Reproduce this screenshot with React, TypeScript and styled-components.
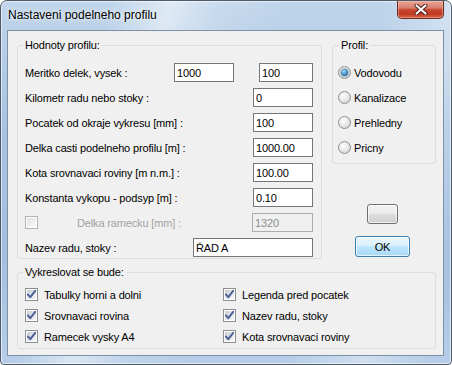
import React from "react";
import styled, { createGlobalStyle } from "styled-components";

const GlobalStyle = createGlobalStyle`
  html, body { margin: 0; padding: 0; background: #ffffff; }
  body { font-family: "Liberation Sans", Arial, sans-serif; font-size: 11px; color: #000; letter-spacing: -0.15px; }
  * { box-sizing: border-box; }
`;

const Window = styled.div`
  width: 452px;
  height: 365px;
  display: flex;
  flex-direction: column;
  border: 1px solid #4e5a68;
  border-radius: 7px 7px 4px 4px;
  padding: 0 7px 8px 6px;
  background:
    linear-gradient(105deg, rgba(255,255,255,0) 20%, rgba(255,255,255,0.5) 31%, rgba(255,255,255,0.15) 40%, rgba(255,255,255,0) 52%, rgba(255,255,255,0) 70%, rgba(255,255,255,0.35) 84%, rgba(255,255,255,0) 96%),
    linear-gradient(180deg, #c0d5eb 0%, #a6c3e2 35%, #a2bfe0 70%, #b6cee8 100%);
  box-shadow: inset 0 0 0 1px rgba(255,255,255,0.6);
`;

const TitleBar = styled.div`
  height: 29px;
  flex: none;
  display: flex;
  justify-content: space-between;
  align-items: flex-start;
`;

const Title = styled.div`
  margin-left: 1px;
  line-height: 29px;
  font-size: 12px;
  letter-spacing: 0;
  color: #000;
  white-space: nowrap;
  text-shadow: 0 0 7px rgba(255,255,255,0.9), 0 0 3px rgba(255,255,255,0.7);
`;

const CloseButton = styled.div`
  width: 47px;
  height: 18px;
  border: 1px solid #6b2a22;
  border-top: none;
  border-radius: 0 0 5px 5px;
  background: linear-gradient(180deg, #e9a596 0%, #d9806f 40%, #c8462f 52%, #c03a22 75%, #d8623f 100%);
  box-shadow: inset 0 0 0 1px rgba(255,210,200,0.4);
  display: flex;
  align-items: center;
  justify-content: center;
`;

const Client = styled.div`
  flex: 1;
  border: 1px solid #7f8fa4;
  background: #f0f0f0;
  padding: 8px 7px 0 9px;
  display: flex;
  flex-direction: column;
  gap: 7px;
`;

const TopRow = styled.div`
  display: flex;
  gap: 10px;
`;

const GroupBox = styled.fieldset<{ $w: number; $pad: string }>`
  margin: 0;
  min-width: 0;
  width: ${(p) => p.$w}px;
  border: 1px solid #d5dfe5;
  border-radius: 3px;
  padding: ${(p) => p.$pad};
`;

const Legend = styled.legend<{ $indent: number }>`
  padding: 0 2px;
  margin-left: ${(p) => p.$indent}px;
  font-size: 11px;
  line-height: 13px;
  color: #000;
`;

const FormRows = styled.div`
  display: flex;
  flex-direction: column;
  gap: 6px;
`;

const Row = styled.div`
  display: flex;
  align-items: center;
  height: 19px;
`;

const Label = styled.span<{ $disabled?: boolean; $indent?: number }>`
  flex: 1;
  font-size: 11px;
  white-space: nowrap;
  color: ${(p) => (p.$disabled ? "#a2a2a2" : "#000")};
  margin-left: ${(p) => p.$indent ?? 0}px;
`;

const TextBox = styled.input<{ $w: number; $gap?: number }>`
  width: ${(p) => p.$w}px;
  height: 19px;
  margin: 0 0 0 ${(p) => p.$gap ?? 0}px;
  padding: 0 0 0 2px;
  border: 1px solid #767676;
  background: #ffffff;
  font-family: "Liberation Sans", Arial, sans-serif;
  font-size: 11px;
  letter-spacing: -0.15px;
  color: #000;
  outline: none;
  &:disabled {
    border-color: #adadad;
    background: #f0f0f0;
    color: #8d8d8d;
  }
`;

const CheckBox = styled.span<{ $disabled?: boolean }>`
  flex: none;
  width: 13px;
  height: 13px;
  padding: 1px;
  border: 1px solid ${(p) => (p.$disabled ? "#b4b4b4" : "#8e8f8f")};
  background:
    ${(p) =>
      p.$disabled
        ? "linear-gradient(135deg, #e2e2e2, #fafafa) content-box"
        : "linear-gradient(135deg, #c9ced5, #f7f7f7) content-box"},
    #ffffff;
  display: flex;
  align-items: center;
  justify-content: center;
  overflow: visible;
`;

const RightColumn = styled.div`
  width: 104px;
  display: flex;
  flex-direction: column;
`;

const RadioList = styled.div`
  display: flex;
  flex-direction: column;
  gap: 6px;
`;

const RadioRow = styled.label`
  display: flex;
  align-items: center;
  gap: 3px;
  height: 19px;
  font-size: 11px;
  white-space: nowrap;
`;

const RadioCircle = styled.span`
  flex: none;
  width: 13px;
  height: 13px;
  border-radius: 50%;
  border: 1px solid #8e8f8f;
  background: radial-gradient(circle at 40% 35%, #ffffff 0%, #ececec 40%, #cacaca 100%);
  display: flex;
  align-items: center;
  justify-content: center;
`;

const RadioDot = styled.span`
  width: 7px;
  height: 7px;
  border-radius: 50%;
  background: radial-gradient(circle at 40% 35%, #b5e3fa 0%, #4b9bd0 40%, #1a4c7e 100%);
  box-shadow: 0 0 0 1px rgba(40, 80, 120, 0.35);
`;

const ButtonStack = styled.div`
  display: flex;
  flex-direction: column;
  align-items: center;
  padding-right: 3px;
`;

const PushButton = styled.div<{ $w: number; $h: number; $top: number; $default?: boolean }>`
  width: ${(p) => p.$w}px;
  height: ${(p) => p.$h}px;
  margin-top: ${(p) => p.$top}px;
  border: 1px solid ${(p) => (p.$default ? "#3c7fb1" : "#707070")};
  border-radius: 3px;
  background: ${(p) =>
    p.$default
      ? "linear-gradient(180deg, #eaf6fd 0%, #d9f0fc 50%, #bee6fd 50%, #a7d9f5 100%)"
      : "linear-gradient(180deg, #f2f2f2 0%, #ebebeb 50%, #dddddd 50%, #cfcfcf 100%)"};
  box-shadow: inset 0 0 0 1px rgba(255,255,255,0.7);
  display: flex;
  align-items: center;
  justify-content: center;
  font-size: 11px;
  color: #000;
`;

const CheckGrid = styled.div`
  display: grid;
  grid-template-columns: 198px 1fr;
  row-gap: 6px;
`;

const CheckItem = styled.label`
  display: flex;
  align-items: center;
  gap: 6px;
  height: 15px;
  font-size: 11px;
  white-space: nowrap;
`;

const CheckMark = () => (
  <svg width="11" height="11" viewBox="0 0 11 11" style={{ flex: "none" }}>
    <path d="M1.8 5.4 L4.3 8.2 L9.2 1.8" fill="none" stroke="#4a5f97" strokeWidth="1.9" strokeLinejoin="round" strokeLinecap="round" />
  </svg>
);

const CloseGlyph = () => (
  <svg width="14" height="11" viewBox="0 0 14 11">
    <path d="M2.5 1.5 L11.5 9.5 M11.5 1.5 L2.5 9.5" stroke="#4a1a14" strokeWidth="4" strokeLinecap="round" />
    <path d="M2.5 1.5 L11.5 9.5 M11.5 1.5 L2.5 9.5" stroke="#ffffff" strokeWidth="2.2" strokeLinecap="round" />
  </svg>
);

const drawOptions: [string, string][] = [
  ["Tabulky horni a dolni", "Legenda pred pocatek"],
  ["Srovnavaci rovina", "Nazev radu, stoky"],
  ["Ramecek vysky A4", "Kota srovnavaci roviny"],
];

const profiles = ["Vodovodu", "Kanalizace", "Prehledny", "Pricny"];

const simpleRows: [string, string][] = [
  ["Kilometr radu nebo stoky :", "0"],
  ["Pocatek od okraje vykresu [mm] :", "100"],
  ["Delka casti podelneho profilu [m] :", "1000.00"],
  ["Kota srovnavaci roviny [m n.m.] :", "100.00"],
  ["Konstanta vykopu - podsyp [m] :", "0.10"],
];

export default function App() {
  return (
    <>
      <GlobalStyle />
      <Window>
        <TitleBar>
          <Title>Nastaveni podelneho profilu</Title>
          <CloseButton>
            <CloseGlyph />
          </CloseButton>
        </TitleBar>
        <Client>
          <TopRow>
            <GroupBox $w={305} $pad="11px 8px 1px 7px">
              <Legend $indent={-2}>Hodnoty profilu:</Legend>
              <FormRows>
                <Row>
                  <Label>Meritko delek, vysek :</Label>
                  <TextBox $w={60} defaultValue="1000" />
                  <TextBox $w={54} $gap={25} defaultValue="100" />
                </Row>
                {simpleRows.map(([label, value]) => (
                  <Row key={label}>
                    <Label>{label}</Label>
                    <TextBox $w={60} defaultValue={value} />
                  </Row>
                ))}
                <Row>
                  <CheckBox $disabled />
                  <Label $disabled $indent={39}>Delka ramecku [mm] :</Label>
                  <TextBox $w={61} defaultValue="1320" disabled />
                </Row>
                <Row>
                  <Label>Nazev radu, stoky :</Label>
                  <TextBox $w={120} defaultValue="ŘAD A" />
                </Row>
              </FormRows>
            </GroupBox>
            <RightColumn>
              <GroupBox $w={104} $pad="11px 4px 6px 5px">
                <Legend $indent={1}>Profil:</Legend>
                <RadioList>
                  {profiles.map((p, i) => (
                    <RadioRow key={p}>
                      <RadioCircle>{i === 0 && <RadioDot />}</RadioCircle>
                      {p}
                    </RadioRow>
                  ))}
                </RadioList>
              </GroupBox>
              <ButtonStack>
                <PushButton $w={31} $h={20} $top={40} />
                <PushButton $w={55} $h={21} $top={12} $default>
                  OK
                </PushButton>
              </ButtonStack>
            </RightColumn>
          </TopRow>
          <GroupBox $w={419} $pad="8px 8px 4px 7px">
            <Legend $indent={-2}>Vykreslovat se bude:</Legend>
            <CheckGrid>
              {drawOptions.flat().map((label) => (
                <CheckItem key={label}>
                  <CheckBox>
                    <CheckMark />
                  </CheckBox>
                  {label}
                </CheckItem>
              ))}
            </CheckGrid>
          </GroupBox>
        </Client>
      </Window>
    </>
  );
}
